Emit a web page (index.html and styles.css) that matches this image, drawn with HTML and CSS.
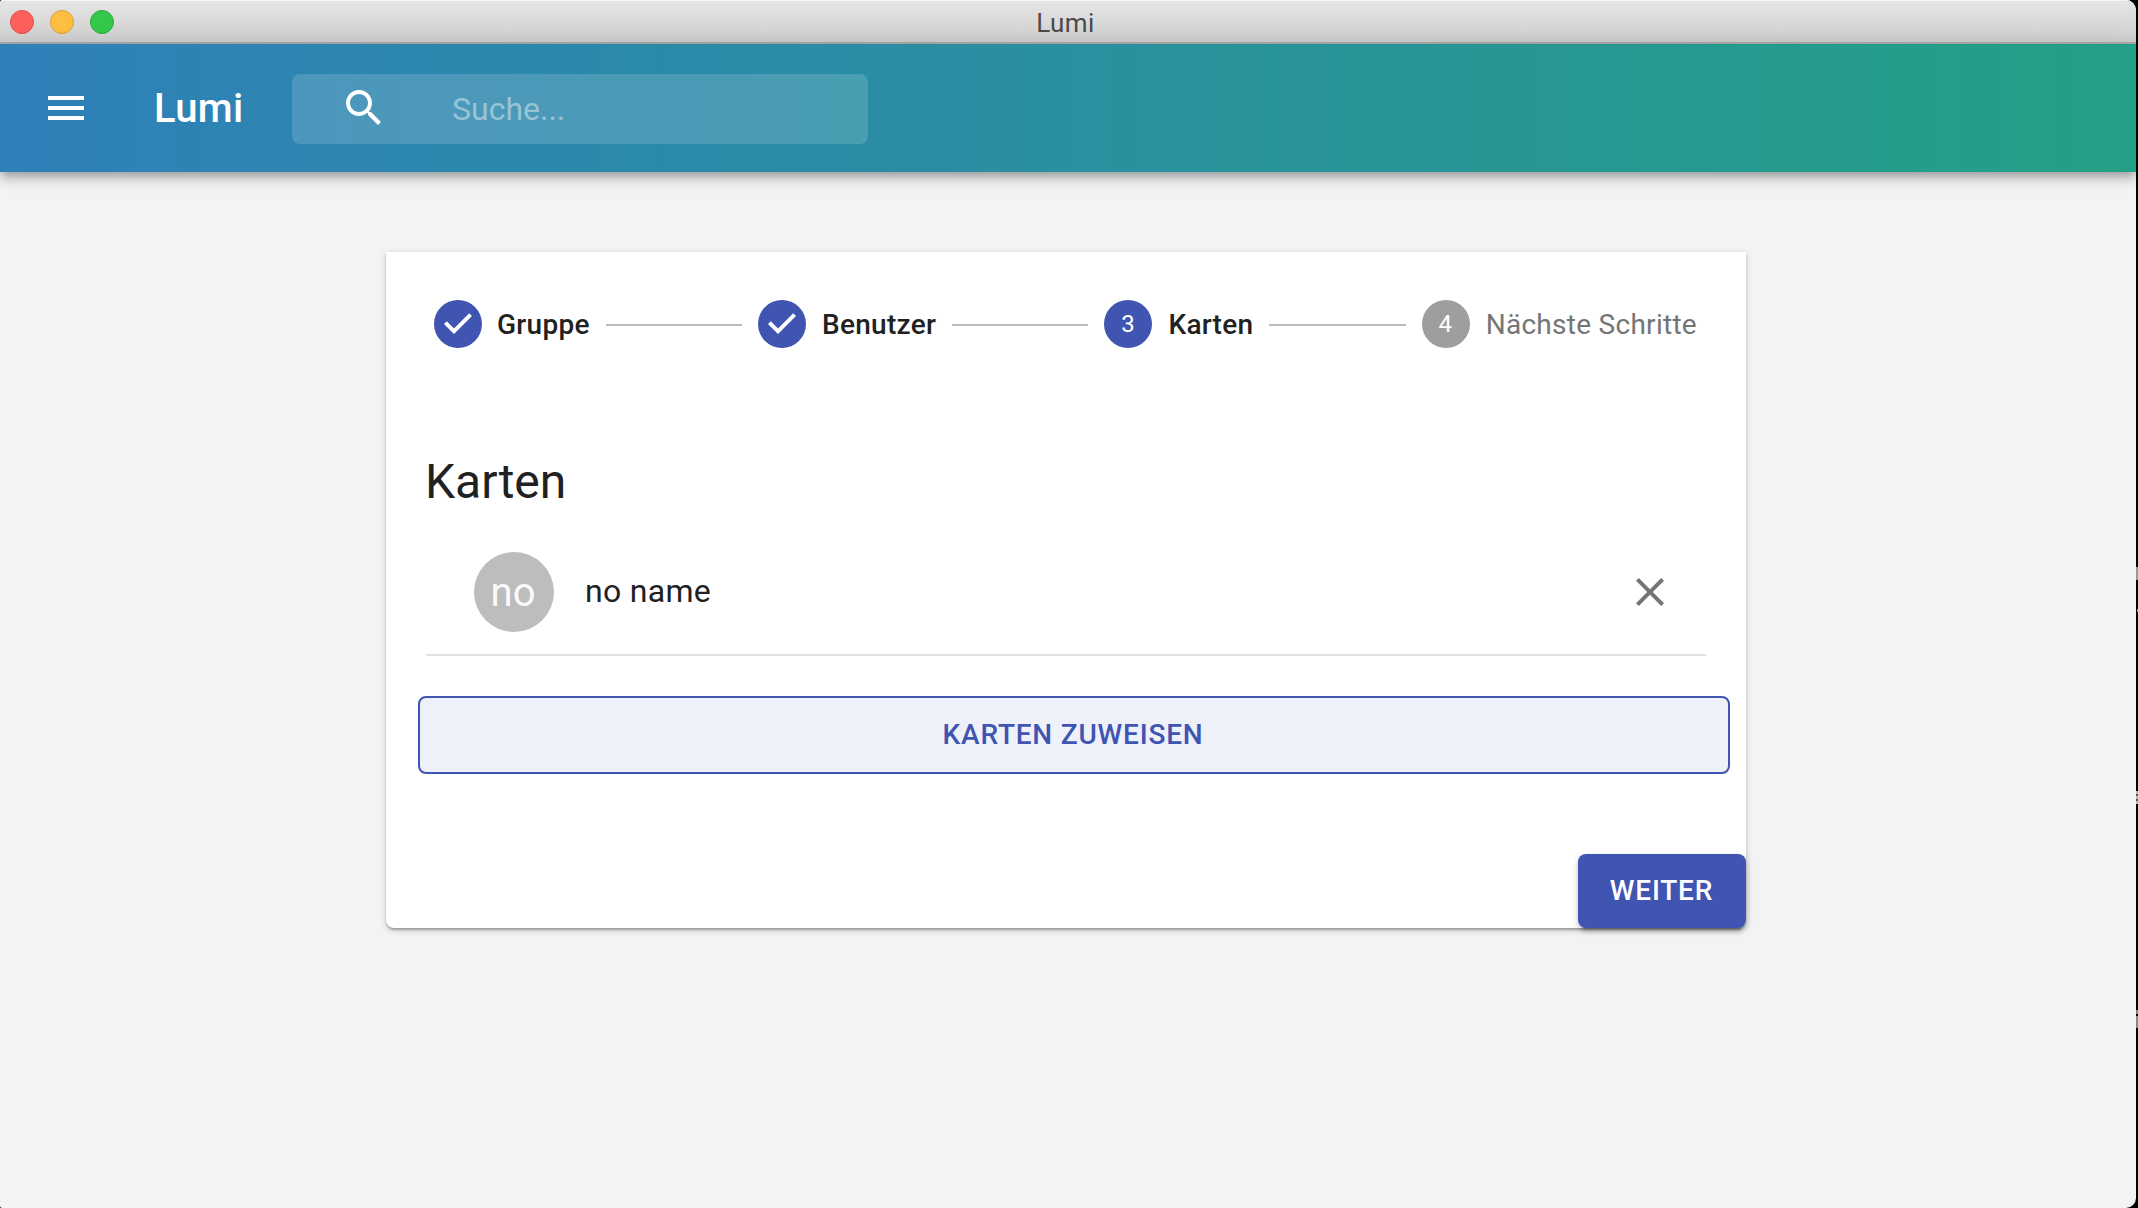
FILE: index.html
```html
<!DOCTYPE html>
<html lang="de">
<head>
<meta charset="utf-8">
<title>Lumi</title>
<link rel="stylesheet" href="styles.css">
</head>
<body>
<div class="window">
  <header class="titlebar">
    <div class="lights">
      <span class="light light-close"></span>
      <span class="light light-min"></span>
      <span class="light light-max"></span>
    </div>
    <span class="window-title">Lumi</span>
  </header>
  <nav class="appbar">
    <svg class="icon menu" viewBox="0 0 24 24"><path d="M3 18h18v-2H3v2zm0-5h18v-2H3v2zm0-7v2h18V6H3z"/></svg>
    <h1 class="brand">Lumi</h1>
    <div class="search">
      <svg class="icon" viewBox="0 0 24 24"><path d="M15.5 14h-.79l-.28-.27C15.41 12.59 16 11.11 16 9.5 16 5.91 13.09 3 9.5 3S3 5.91 3 9.5 5.91 16 9.5 16c1.61 0 3.09-.59 4.23-1.57l.27.28v.79l5 4.99L20.49 19l-4.99-5zm-6 0C7.01 14 5 11.99 5 9.5S7.01 5 9.5 5 14 7.01 14 9.5 11.99 14 9.5 14z"/></svg>
      <span class="placeholder">Suche...</span>
    </div>
  </nav>
  <main class="content">
    <section class="card">
      <div class="stepper">
        <div class="step step-first">
          <svg class="icon step-icon" viewBox="0 0 24 24"><path d="M12 0a12 12 0 1 0 0 24 12 12 0 0 0 0-24zm-2 17l-5-5 1.4-1.4 3.6 3.6 7.6-7.6L19 8l-9 9z"/></svg>
          <span class="step-label">Gruppe</span>
        </div>
        <span class="connector"></span>
        <div class="step">
          <svg class="icon step-icon" viewBox="0 0 24 24"><path d="M12 0a12 12 0 1 0 0 24 12 12 0 0 0 0-24zm-2 17l-5-5 1.4-1.4 3.6 3.6 7.6-7.6L19 8l-9 9z"/></svg>
          <span class="step-label">Benutzer</span>
        </div>
        <span class="connector"></span>
        <div class="step">
          <span class="step-number">3</span>
          <span class="step-label">Karten</span>
        </div>
        <span class="connector"></span>
        <div class="step pending">
          <span class="step-number">4</span>
          <span class="step-label">Nächste Schritte</span>
        </div>
      </div>
      <h2 class="heading">Karten</h2>
      <div class="list-item">
        <span class="avatar">no</span>
        <span class="name">no name</span>
        <svg class="icon close" viewBox="0 0 24 24"><path d="M19 6.41L17.59 5 12 10.59 6.41 5 5 6.41 10.59 12 5 17.59 6.41 19 12 13.41 17.59 19 19 17.59 13.41 12z"/></svg>
      </div>
      <button class="button assign">KARTEN ZUWEISEN</button>
      <div class="actions"><button class="button next">WEITER</button></div>
    </section>
  </main>
</div>
<div class="behind">
  <i class="bit bit-a"></i><i class="bit bit-b"></i><i class="bit bit-c"></i><i class="bit bit-d"></i>
</div>
</body>
</html>
```
FILE: styles.css
```css
* { box-sizing: border-box; }
body {
  margin: 0;
  display: flex;
  width: 2138px;
  height: 1208px;
  overflow: hidden;
  background: #000;
  font-family: Roboto, "Liberation Sans", sans-serif;
  color: #212121;
}
.window {
  width: 2136px;
  height: 1208px;
  overflow: hidden;
  background: #f1f3f5;
  border-radius: 3px 10px 10px 2px;
}
.titlebar {
  display: grid;
  grid-template-columns: 1fr auto 1fr;
  align-items: center;
  height: 44px;
  padding: 0 10px;
  background: linear-gradient(#e6e6e6, #cecece);
  border-bottom: 2px solid #adadad;
  box-shadow: inset 0 1px #f6f6f6;
}
.lights { display: flex; gap: 16px; padding-top: 2px; }
.light { width: 24px; height: 24px; border-radius: 50%; border: 1px solid; }
.light-close { background: #fc605c; border-color: #e04b47; }
.light-min { background: #fdbe41; border-color: #dea035; }
.light-max { background: #34c84a; border-color: #2aaa3a; }
.window-title {
  font-size: 26px;
  line-height: 30px;
  padding: 4px 5px 0 0;
  color: #4a4a4a;
  letter-spacing: .4px;
}
.appbar {
  position: relative;
  display: flex;
  align-items: center;
  height: 128px;
  padding-left: 42px;
  background: linear-gradient(90deg, #2f80b9, #23a085);
  box-shadow: 0 4px 8px -2px rgba(0,0,0,.2), 0 8px 10px rgba(0,0,0,.14), 0 2px 20px rgba(0,0,0,.12);
  color: #fff;
}
.icon { width: 48px; height: 48px; flex: none; fill: currentColor; display: block; }
.brand {
  margin: 0;
  width: 138px;
  margin-left: 64px;
  padding-top: 2px;
  font-size: 40px;
  font-weight: 500;
  line-height: 64px;
  letter-spacing: .3px;
}
.search {
  display: flex;
  align-items: center;
  width: 576px;
  height: 70px;
  margin-top: 2px;
  padding-left: 48px;
  border-radius: 8px;
  background: rgba(255,255,255,.15);
}
.search .icon { margin-top: -2px; }
.placeholder { margin-left: 64px; font-size: 32px; line-height: 38px; opacity: .42; }
.content { padding: 80px 0 0 386px; }
.card {
  width: 1360px;
  height: 676px;
  background: #fff;
  border-radius: 0 0 8px 8px;
  box-shadow: 0 2px 6px rgba(0,0,0,.2), 0 2px 2px rgba(0,0,0,.14), 0 4px 2px -2px rgba(0,0,0,.12);
}
.stepper { display: flex; align-items: center; height: 144px; padding: 0 49px 0 48px; }
.step { display: flex; align-items: center; gap: 16px; }
.step-first { gap: 15px; }
.step-icon { color: #4054b2; }
.connector { flex: 1; height: 2px; margin: 2px 16px 0; background: #bdbdbd; }
.step-number {
  width: 48px;
  height: 48px;
  border-radius: 50%;
  background: #4054b2;
  color: #fff;
  font-size: 24px;
  line-height: 48px;
  padding-right: 1px;
  text-align: center;
}
.step-label { padding-top: 2px; font-size: 28px; font-weight: 500; line-height: 40px; letter-spacing: .28px; }
.pending .step-number { background: #9e9e9e; }
.pending .step-label { color: #757575; font-weight: 400; }
.heading { margin: 54px 40px 0 39px; font-size: 48px; line-height: 64px; font-weight: 400; }
.list-item {
  display: flex;
  align-items: center;
  height: 126px;
  margin: 16px 40px 0;
  padding: 0 32px 0 48px;
  border-bottom: 2px solid #e0e0e0;
}
.avatar {
  width: 80px;
  height: 80px;
  border-radius: 50%;
  background: #bdbdbd;
  color: #fafafa;
  font-size: 40px;
  line-height: 82px;
  padding-right: 2px;
  text-align: center;
}
.name { flex: 1; margin-left: 31px; padding-bottom: 2px; font-size: 32px; line-height: 48px; letter-spacing: .3px; }
.close { color: #757575; }
.button {
  display: block;
  border: 0;
  border-radius: 8px;
  font: 500 28px/49px Roboto, "Liberation Sans", sans-serif;
  letter-spacing: .8px;
}
.assign {
  width: 1312px;
  height: 78px;
  margin: 40px 0 0 32px;
  padding: 0 8px 2px 6px;
  border: 2px solid #4054b2;
  background: #eef1f9;
  color: #4054b2;
}
.actions { display: flex; justify-content: flex-end; margin-top: 80px; }
.next {
  width: 168px;
  height: 74px;
  padding: 0 7px 2px 6px;
  background: #4054b2;
  color: #fff;
  box-shadow: 0 6px 2px -4px rgba(0,0,0,.2), 0 4px 4px rgba(0,0,0,.14), 0 2px 10px rgba(0,0,0,.12);
}
/* slivers of the window that lies behind the right edge */
.behind { position: relative; width: 2px; height: 1208px; }
.bit { position: absolute; left: 0; width: 2px; background: #999; }
.bit-a { top: 567px; height: 13px; }
.bit-b { top: 609px; height: 3px; left: 1px; width: 1px; }
.bit-c { top: 791px; height: 13px; background: repeating-linear-gradient(#bbb 0 3px, #555 3px 5px); }
.bit-d { top: 1010px; height: 18px; background: linear-gradient(#888 4px, #000 4px 6px, #888 6px); }
```
